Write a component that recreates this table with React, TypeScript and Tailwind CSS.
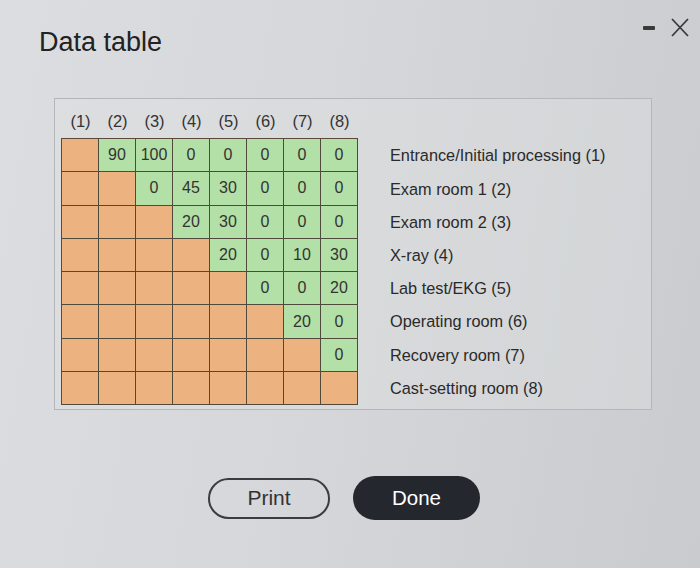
import React from "react";

const data: (string | null)[][] = [
  [null, "90", "100", "0", "0", "0", "0", "0"],
  [null, null, "0", "45", "30", "0", "0", "0"],
  [null, null, null, "20", "30", "0", "0", "0"],
  [null, null, null, null, "20", "0", "10", "30"],
  [null, null, null, null, null, "0", "0", "20"],
  [null, null, null, null, null, null, "20", "0"],
  [null, null, null, null, null, null, null, "0"],
  [null, null, null, null, null, null, null, null],
];

const legend = [
  "Entrance/Initial processing (1)",
  "Exam room 1 (2)",
  "Exam room 2 (3)",
  "X-ray (4)",
  "Lab test/EKG (5)",
  "Operating room (6)",
  "Recovery room (7)",
  "Cast-setting room (8)",
];

export default function App() {
  return (
    <div
      className="w-[700px] h-[568px] overflow-hidden flex flex-col text-[#2a2a2a] bg-[linear-gradient(100deg,#dcdde0_0%,#d6d7da_45%,#c9cbcf_100%)]"
      style={{ fontFamily: '"Liberation Sans", Arial, sans-serif' }}
    >
      <div className="flex items-start justify-between pl-[39px] pr-[10px] pt-[26px] h-[98px]">
        <div className="text-[27px] leading-[32px] text-[#222]">Data table</div>
        <div className="flex items-center gap-[14px] -mt-[9px]">
          <svg width="14" height="6" viewBox="0 0 14 6">
            <rect x="1" y="1" width="12" height="4" rx="1" fill="#3a3a3a" />
          </svg>
          <svg width="20" height="21" viewBox="0 0 20 21">
            <path d="M2 2 L18 19 M18 2 L2 19" stroke="#3a3a3a" strokeWidth="1.8" />
          </svg>
        </div>
      </div>

      <div className="ml-[54px] w-[598px] h-[312px] border border-[#b5b6b9] bg-[#dfe0e2]/40 flex pl-[6px]">
        <div className="flex flex-col">
          <div className="flex h-[39px] items-end pb-[7px] pl-[1px]">
            {Array.from({ length: 8 }).map((_, i) => (
              <div key={i} className="w-[37px] text-center text-[16.5px] leading-[19px] text-[#333]">
                ({i + 1})
              </div>
            ))}
          </div>
          <div className="flex flex-col border-l-[1.5px] border-t-[1.5px] border-[#5b4a3b]">
            {data.map((row, r) => (
              <div key={r} className="flex">
                {row.map((v, c) => (
                  <div
                    key={c}
                    className={
                      "w-[37px] h-[33.3px] border-r-[1.5px] border-b-[1.5px] border-[#4f4a3c] flex items-center justify-center text-[16px] text-[#333] " +
                      (c > r ? "bg-[#b3e0a6]" : "bg-[#ecb27f]")
                    }
                  >
                    {v}
                  </div>
                ))}
              </div>
            ))}
          </div>
        </div>
        <div className="flex flex-col ml-[32px] pt-[40px]">
          {legend.map((l) => (
            <div key={l} className="h-[33.2px] flex items-center text-[16.3px] text-[#2a2a2a] whitespace-nowrap">
              {l}
            </div>
          ))}
        </div>
      </div>

      <div className="flex justify-center items-center gap-[23px] mt-[66px] pr-[12px]">
        <button className="w-[122px] h-[41px] rounded-full border-2 border-[#3c3c3c] text-[21px] text-[#333] flex items-center justify-center bg-transparent">
          Print
        </button>
        <button className="w-[127px] h-[44px] rounded-full bg-[#24272e] text-white text-[20.5px] flex items-center justify-center">
          Done
        </button>
      </div>
    </div>
  );
}
